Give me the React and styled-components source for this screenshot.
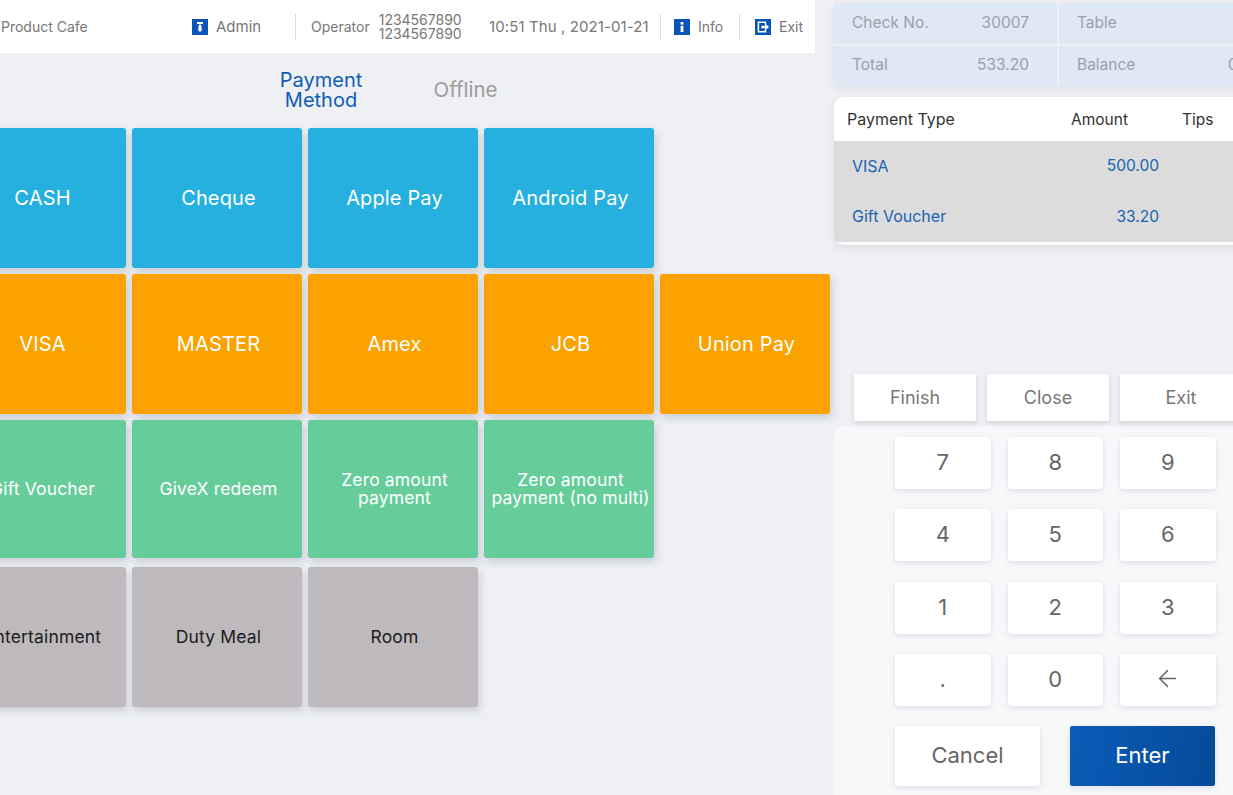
import React from 'react'
import styled, { createGlobalStyle } from 'styled-components'
import { ArrowLeft } from 'lucide-react'

const GlobalStyle = createGlobalStyle`
  html, body {
    margin: 0;
    padding: 0;
    background: #eef0f4;
    font-family: Inter, "Liberation Sans", sans-serif;
  }
`

const Screen = styled.div`
  display: flex;
  width: 1233px;
  height: 795px;
  overflow: hidden;
  background: #eef0f4;
`

const LeftColumn = styled.div`
  flex: none;
  width: 834px;
`

const Header = styled.header`
  display: flex;
  align-items: center;
  width: 815px;
  height: 53px;
  box-sizing: border-box;
  background: #fff;
  color: #777;
  white-space: nowrap;
`

const Brand = styled.span`
  width: 192px;
  padding-left: 1px;
  box-sizing: border-box;
  font-size: 14px;
`

const HeaderItem = styled.div`
  display: flex;
  align-items: center;
  gap: 8px;
  width: ${p => p.$width}px;
  font-size: ${p => p.$size || 14}px;
`

const Divider = styled.span`
  width: 1px;
  height: 26px;
  margin-right: ${p => p.$after}px;
  background: #ddd;
`

const Numbers = styled.span`
  margin-left: 1px;
  font-size: 14px;
  line-height: 14px;
`

const TimeText = styled.span`
  width: 171px;
  font-size: 15px;
  letter-spacing: 0.1px;
`

const Tabs = styled.nav`
  display: flex;
  align-items: center;
  gap: 70px;
  height: 73px;
  padding: 0 0 2px 279px;
`

const Tab = styled.span`
  width: ${p => p.$width}px;
  color: ${p => (p.$active ? '#0f5db5' : '#9c9c9c')};
  font-size: ${p => (p.$active ? 20 : 20.5)}px;
  line-height: 20px;
  text-align: center;
`

const TileGrid = styled.div`
  margin-left: -44px;
`

const TileRow = styled.div`
  display: flex;
  gap: 6px;
  height: ${p => p.$height || 140}px;
  margin-bottom: ${p => p.$gap || 6}px;
`

const palette = {
  blue: ['#25b0e0', '#fff', 20],
  orange: ['#faa200', '#fff', 20],
  green: ['#66cd9a', '#fff', 17.5],
  grey: ['#bdb9bc', '#1c1c1c', 17.5],
}

const Tile = styled.button`
  flex: none;
  width: 170px;
  padding: 0 0 0 3px;
  border: 0;
  border-radius: 3px;
  background: ${p => palette[p.$kind][0]};
  box-shadow: 2px 4px 8px rgba(70, 80, 100, 0.22);
  color: ${p => palette[p.$kind][1]};
  font: inherit;
  font-size: ${p => palette[p.$kind][2]}px;
  letter-spacing: 0.15px;
  line-height: 18px;
  white-space: nowrap;
`

const RightColumn = styled.div`
  flex: none;
  width: 399px;
  padding-top: 3px;
`

const InfoGrid = styled.div`
  display: grid;
  grid-template-columns: 223px 223px;
  grid-template-rows: 41px 40px;
  gap: 2px;
  width: 448px;
  border-radius: 0 0 0 8px;
  box-shadow: 0 3px 8px rgba(70, 80, 100, 0.1);
`

const InfoCell = styled.div`
  display: flex;
  align-items: center;
  justify-content: space-between;
  padding: 0 ${p => p.$right || 28}px ${p => p.$lift || 2}px 18px;
  background: #dfe8f5;
  color: #9ba1a8;
  font-size: 15.5px;
`

const PayTable = styled.div`
  width: 448px;
  height: 148px;
  margin-top: 11px;
  overflow: hidden;
  border-radius: 10px 0 0 10px;
  background: #fff;
  box-shadow: 0 3px 8px rgba(70, 80, 100, 0.1);
`

const TableHead = styled.div`
  display: grid;
  grid-template-columns: 224px 111px 1fr;
  align-items: center;
  height: 44px;
  padding-left: 13px;
  color: #333;
  font-size: 15.5px;
`

const HeadLabel = styled.span`
  font-size: ${p => p.$size || 15.5}px;
`

const TableBody = styled.div`
  background: #dcdcdc;
`

const TableRow = styled.div`
  display: grid;
  grid-template-columns: 200px 107px;
  align-items: center;
  height: 50.5px;
  padding: 0 0 1px 18px;
  box-sizing: border-box;
  color: #1a62b4;
  font-size: 15.5px;
`

const RowLabel = styled.span`
  font-size: 16px;
`

const Amount = styled.span`
  text-align: right;
`

const ActionRow = styled.div`
  display: flex;
  gap: 11px;
  margin: 129px 0 5px 20px;
`

const ActionButton = styled.button`
  flex: none;
  width: 122px;
  height: 47px;
  padding: 0 0 1px;
  border: 0;
  background: #fff;
  box-shadow: 0 2px 5px rgba(70, 80, 100, 0.18);
  color: #777;
  font: inherit;
  font-size: 18px;
`

const Numpad = styled.div`
  height: 369px;
  box-sizing: border-box;
  padding: 11px 0 0 61px;
  border-radius: 10px 0 0 0;
  background: #f6f8fa;
`

const Keys = styled.div`
  display: grid;
  grid-template-columns: repeat(3, 95.5px);
  grid-auto-rows: 52px;
  column-gap: 17px;
  row-gap: 20.3px;
`

const Key = styled.button`
  display: flex;
  align-items: center;
  justify-content: center;
  padding: 0 0 2px;
  border: 0;
  border-radius: 4px;
  background: #fff;
  box-shadow: 0 2px 6px rgba(70, 80, 100, 0.14);
  color: #666;
  font: inherit;
  font-size: 22px;
`

const BottomRow = styled.div`
  display: flex;
  justify-content: space-between;
  width: 320px;
  margin-top: 20px;
`

const BigButton = styled.button`
  width: 145px;
  height: 60px;
  padding: 0 0 1px;
  border: 0;
  border-radius: 2px;
  background: ${p => (p.$primary ? 'linear-gradient(100deg, #0a5cb8, #064a98)' : '#fff')};
  box-shadow: 0 2px 6px rgba(70, 80, 100, 0.14);
  color: ${p => (p.$primary ? '#fff' : '#666')};
  font: inherit;
  font-size: 22px;
`

function BlueIcon({ children }) {
  return (
    <svg width="16" height="16" viewBox="0 0 16 16">
      <rect width="16" height="16" fill="#0a55b5" />
      {children}
    </svg>
  )
}

const TILES = [
  { kind: 'blue', items: ['CASH', 'Cheque', 'Apple Pay', 'Android Pay'] },
  { kind: 'orange', items: ['VISA', 'MASTER', 'Amex', 'JCB', 'Union Pay'] },
  {
    kind: 'green',
    height: 138,
    gap: 9,
    items: ['Gift Voucher', 'GiveX redeem', 'Zero amount\npayment', 'Zero amount\npayment (no multi)'],
  },
  { kind: 'grey', items: ['Entertainment', 'Duty Meal', 'Room'] },
]

const KEYS = ['7', '8', '9', '4', '5', '6', '1', '2', '3', '.', '0']

export default function App() {
  return (
    <Screen>
      <GlobalStyle />
      <LeftColumn>
        <Header>
          <Brand>Product Cafe</Brand>
          <HeaderItem $width={103} $size={15}>
            <BlueIcon>
              <rect x="5" y="3" width="6" height="2" fill="#fff" />
              <path d="M7 5.5h2l1 5.5-2 2-2-2z" fill="#fff" />
            </BlueIcon>
            Admin
          </HeaderItem>
          <Divider $after={15} />
          <HeaderItem $width={178}>
            Operator
            <Numbers>
              1234567890
              <br />
              1234567890
            </Numbers>
          </HeaderItem>
          <TimeText>10:51 Thu , 2021-01-21</TimeText>
          <Divider $after={13} />
          <HeaderItem $width={65}>
            <BlueIcon>
              <rect x="6.6" y="3" width="2.8" height="2.6" fill="#fff" />
              <rect x="6.6" y="6.8" width="2.8" height="6.2" fill="#fff" />
            </BlueIcon>
            Info
          </HeaderItem>
          <Divider $after={15} />
          <HeaderItem $width={60}>
            <BlueIcon>
              <path d="M10.5 5.6V3.2H3.4v9.6h7.1v-2.4" fill="none" stroke="#fff" strokeWidth="1.5" />
              <path d="M6.4 6.8h3.8V4.6L14 8l-3.8 3.4V9.2H6.4z" fill="#fff" />
            </BlueIcon>
            Exit
          </HeaderItem>
        </Header>
        <Tabs>
          <Tab $active $width={84}>Payment Method</Tab>
          <Tab $width={65}>Offline</Tab>
        </Tabs>
        <TileGrid>
          {TILES.map(row => (
            <TileRow key={row.kind} $height={row.height} $gap={row.gap}>
              {row.items.map(label => (
                <Tile key={label} $kind={row.kind}>
                  {label.split('\n').map(line => (
                    <div key={line}>{line}</div>
                  ))}
                </Tile>
              ))}
            </TileRow>
          ))}
        </TileGrid>
      </LeftColumn>
      <RightColumn>
        <InfoGrid>
          <InfoCell><span>Check No.</span><span>30007</span></InfoCell>
          <InfoCell><span>Table</span></InfoCell>
          <InfoCell $lift={4}><span>Total</span><span>533.20</span></InfoCell>
          <InfoCell $lift={4} $right={21}><span>Balance</span><span>0.00</span></InfoCell>
        </InfoGrid>
        <PayTable>
          <TableHead>
            <HeadLabel $size={16}>Payment Type</HeadLabel>
            <HeadLabel>Amount</HeadLabel>
            <HeadLabel>Tips</HeadLabel>
          </TableHead>
          <TableBody>
            <TableRow><RowLabel>VISA</RowLabel><Amount>500.00</Amount></TableRow>
            <TableRow><RowLabel>Gift Voucher</RowLabel><Amount>33.20</Amount></TableRow>
          </TableBody>
        </PayTable>
        <ActionRow>
          <ActionButton>Finish</ActionButton>
          <ActionButton>Close</ActionButton>
          <ActionButton>Exit</ActionButton>
        </ActionRow>
        <Numpad>
          <Keys>
            {KEYS.map(k => (
              <Key key={k}>{k}</Key>
            ))}
            <Key aria-label="Backspace"><ArrowLeft size={27} strokeWidth={1.3} /></Key>
          </Keys>
          <BottomRow>
            <BigButton>Cancel</BigButton>
            <BigButton $primary>Enter</BigButton>
          </BottomRow>
        </Numpad>
      </RightColumn>
    </Screen>
  )
}
